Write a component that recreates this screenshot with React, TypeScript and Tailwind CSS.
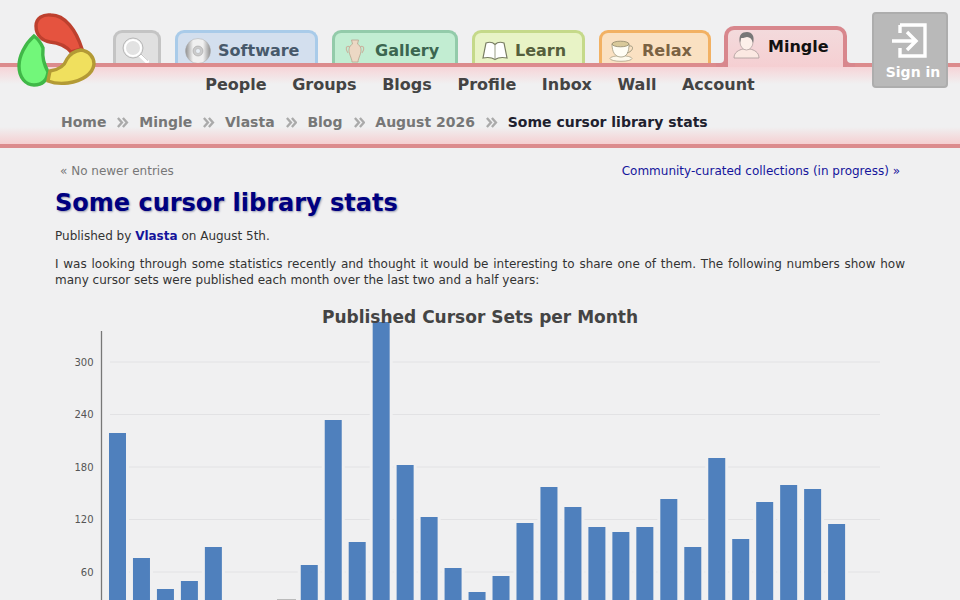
import React from "react";

const tops: [number, number][] = [
  [0, 433], [1, 558], [2, 589], [3, 581], [4, 547], [8, 565], [9, 420], [10, 542],
  [11, 322], [12, 465], [13, 517], [14, 568], [15, 592], [16, 576], [17, 523], [18, 487],
  [19, 507], [20, 527], [21, 532], [22, 527], [23, 499], [24, 547], [25, 458], [26, 539],
  [27, 502], [28, 485], [29, 489], [30, 524],
];
const bars: [number, number][] = tops.map(([i, y]) => [109 + i * 23.97, y]);
const grid: [string, number][] = [["300", 362], ["240", 414.5], ["180", 467], ["120", 519.5], ["60", 572]];

function Logo() {
  return (
    <svg width="110" height="100" viewBox="0 0 110 100" className="absolute left-0 top-0 z-20">
      <path d="M36,26 C36,18 43,14 51,15 C65,15 76,30 82,49 L71,52 C66,46 60,43 50,42 C43,41 36,36 36,26 Z" fill="#e5533f" stroke="#bd402e" strokeWidth="3.4" />
      <path d="M34,36 C25,44 19,56 19,66 C19,78 26,85 34,85 C42,85 47,81 48,72 C44,64 42,58 43,48 C41,43 38,39 34,36 Z" fill="#72f77a" stroke="#40b848" strokeWidth="3.4" />
      <path d="M81,50 C89,51 94,57 94,64 C93,74 82,81 68,83 C60,84 53,83 48,81 L50,71 C58,70 64,67 67,59 C70,54 75,51 81,50 Z" fill="#f0e05e" stroke="#b39a35" strokeWidth="3.4" />
    </svg>
  );
}

function Magnifier() {
  return (
    <svg width="30" height="30" viewBox="0 0 30 30">
      <path d="M18,18 L26,25.5" stroke="#fff" strokeWidth="4" strokeLinecap="round" />
      <path d="M19,17 L27,24.5" stroke="#bbb" strokeWidth="1" />
      <circle cx="12" cy="12" r="10" fill="#e6e6e6" stroke="#b8b8b8" strokeWidth="1" />
      <circle cx="12" cy="12" r="8" fill="#e2e2e2" stroke="#fff" strokeWidth="2" />
    </svg>
  );
}

function Cd() {
  return (
    <svg width="26" height="26" viewBox="0 0 26 26">
      <defs>
        <linearGradient id="cdg" x1="0" y1="0.5" x2="1" y2="0.5">
          <stop offset="0" stopColor="#8f8f8f" />
          <stop offset="0.3" stopColor="#f0f0f0" />
          <stop offset="0.7" stopColor="#f0f0f0" />
          <stop offset="1" stopColor="#8f8f8f" />
        </linearGradient>
      </defs>
      <circle cx="13" cy="13" r="12.5" fill="url(#cdg)" stroke="#aaa" strokeWidth="0.5" />
      <circle cx="13" cy="13" r="5" fill="#ccc" stroke="#999" strokeWidth="0.5" />
      <circle cx="13" cy="13" r="2.5" fill="#e8eef4" stroke="#aaa" strokeWidth="0.5" />
    </svg>
  );
}

function Vase() {
  return (
    <svg width="20" height="24" viewBox="0 0 20 24">
      <path d="M6.5,1 L13.5,1 L12.5,5 C16,7 17,11 15,16 C14,19 13,21 13,23 L7,23 C7,21 6,19 5,16 C3,11 4,7 7.5,5 Z" fill="#ecd8c4" stroke="#b7a48f" strokeWidth="0.8" />
      <path d="M5,8 C1,6 0,10 3,14 M15,8 C19,6 20,10 17,14" fill="none" stroke="#c9b5a0" strokeWidth="1.2" />
    </svg>
  );
}

function Book() {
  return (
    <svg width="26" height="20" viewBox="0 0 26 20">
      <path d="M1,17 L4,2 C8,0.5 11,1.5 13,3.5 C15,1.5 18,0.5 22,2 L25,17 C20,16 16,16.5 13,18.5 C10,16.5 6,16 1,17 Z" fill="#fff" stroke="#777c62" strokeWidth="1.2" />
      <path d="M13,3.5 L13,18.5" stroke="#999e85" strokeWidth="1" />
    </svg>
  );
}

function Cup() {
  return (
    <svg width="26" height="22" viewBox="0 0 26 22">
      <ellipse cx="12" cy="18.5" rx="11" ry="2.8" fill="#fdf8ea" stroke="#a09a80" strokeWidth="0.7" />
      <path d="M3,4 C3,12 6,17 12,17 C18,17 20,12 20,4 Z" fill="#fffdf4" stroke="#a09a80" strokeWidth="0.8" />
      <ellipse cx="11.5" cy="4" rx="8.5" ry="2.8" fill="#d9c99a" stroke="#8f8768" strokeWidth="0.8" />
      <path d="M20,6 C25,5 25,11 18,13" fill="none" stroke="#a09a80" strokeWidth="1" />
    </svg>
  );
}

function Person() {
  return (
    <svg width="27" height="28" viewBox="0 0 27 28">
      <path d="M1,27 C1,21 6,19 10,18 L17,18 C21,19 26,21 26,27 Z" fill="#fbe8e2" stroke="#a99" strokeWidth="0.8" />
      <ellipse cx="13.5" cy="11" rx="6.5" ry="8" fill="#fdf0ea" stroke="#a99" strokeWidth="0.7" />
      <path d="M7,12 C5,4 9,1 14,1 C19,1 22,5 20,12 C19,8 17,6 14,6 C11,7 9,7 8,7 Z" fill="#777" />
    </svg>
  );
}

function Chevrons() {
  return (
    <svg width="12.8" height="11" viewBox="0 0 12 11" className="mx-[10px]">
      <path d="M1.5,1 L5.5,5.5 L1.5,10 M6.5,1 L10.5,5.5 L6.5,10" fill="none" stroke="#aaa" strokeWidth="2.4" />
    </svg>
  );
}

function Tab({ cls, text, icon, label }: { cls: string; text: string; icon: React.ReactNode; label: string }) {
  return (
    <a className={"flex h-[33px] items-center overflow-hidden rounded-t-[9px] border-[3px] border-b-0 pl-[7px] pt-[5px] text-[16px] font-bold " + cls}>
      <span className="flex w-[26px] shrink-0 justify-center">{icon}</span>
      <span className={"ml-[7px] " + text}>{label}</span>
    </a>
  );
}

function Chart() {
  return (
    <svg width="960" height="300" viewBox="0 300 960 300" className="-ml-[55px] mt-[12px] block max-w-none">
      {grid.map(([l, y]) => (
        <g key={l}>
          <line x1="110" x2="880" y1={y} y2={y} stroke="#e2e2e4" strokeWidth="1" />
          <text x="93.5" y={y + 3.5} textAnchor="end" fontSize="10" fill="#555">{l}</text>
        </g>
      ))}
      <line x1="101.5" x2="101.5" y1="331" y2="600" stroke="#777" strokeWidth="1.3" />
      {bars.map(([x, y]) => (
        <rect key={"h" + x} x={x - 3} y={y - 3} width="23" height={606 - y} fill="#f0f0f1" />
      ))}
      <rect x="277" y="599" width="19" height="1" fill="#bbb" />
      {bars.map(([x, y]) => (
        <rect key={x} x={x} y={y} width="17" height={600 - y} fill="#4f80bd" />
      ))}
      <text x="480" y="323" textAnchor="middle" fontSize="17" fontWeight="700" fill="#444">Published Cursor Sets per Month</text>
    </svg>
  );
}

export default function App() {
  const crumbs = ["Home", "Mingle", "Vlasta", "Blog", "August 2026"];
  return (
    <div className="relative h-[600px] w-[960px] overflow-hidden bg-[#f0f0f1] font-['DejaVu_Sans',sans-serif]">
      <Logo />
      <header>
        <div className="relative z-10 flex h-[63px] items-end pl-[113px]">
          <a className="flex h-[33px] w-[48px] overflow-hidden rounded-t-[9px] border-[3px] border-b-0 border-[#c4c4c4] bg-[#e0e0e0] pl-[5px] pt-[3px]">
            <span className="block h-[30px] w-[30px]"><Magnifier /></span>
          </a>
          <div className="ml-[14px] w-[143px]">
            <Tab cls="border-[#a9cbe9] bg-[#d3dfee]" text="text-[#47596b]" icon={<Cd />} label="Software" />
          </div>
          <div className="ml-[14px] w-[126px]">
            <Tab cls="border-[#93cbaa] bg-[#c2edd2]" text="text-[#3c6650]" icon={<Vase />} label="Gallery" />
          </div>
          <div className="ml-[14px] w-[113px]">
            <Tab cls="border-[#c5d98a] bg-[#e8f3c6]" text="text-[#555f3c]" icon={<Book />} label="Learn" />
          </div>
          <div className="ml-[14px] w-[112px]">
            <Tab cls="border-[#f2b163] bg-[#fae1c2]" text="text-[#7a6242]" icon={<Cup />} label="Relax" />
          </div>
          <div className="relative -mb-[4px] ml-[13px] flex h-[41px] w-[123px] items-start rounded-t-[10px] border-4 border-b-0 border-[#d8878d] bg-[linear-gradient(#f3dadc,#f5cfd2)] pl-[5px] pt-[1px] text-[16px] font-bold text-[#111]">
            <Person />
            <span className="ml-[8px] mt-[4px]">Mingle</span>
            <span className="absolute -left-[12px] bottom-0 h-[10px] w-[12px] rounded-br-[8px] border-b-4 border-r-4 border-[#d8878d] bg-[#f0f0f1]" />
            <span className="absolute -right-[12px] bottom-0 h-[10px] w-[12px] rounded-bl-[8px] border-b-4 border-l-4 border-[#d8878d] bg-[#f0f0f1]" />
          </div>
        </div>
        <div className="h-[85px] border-y-4 border-[#dc8b8d] bg-[linear-gradient(#f6d4d7_0px,#f0f0f1_17px,#f0f0f1_60px,#f5cfd1_77px)]">
          <nav className="flex h-[34px] items-center justify-center gap-[25.6px] pt-[1px] text-[16px] font-bold text-[#444]">
            <a>People</a>
            <a>Groups</a>
            <a>Blogs</a>
            <a>Profile</a>
            <a>Inbox</a>
            <a>Wall</a>
            <a>Account</a>
          </nav>
          <div className="mt-[4px] flex h-[34px] items-center pl-[61px] text-[14px] font-bold text-[#777]">
            {crumbs.map((c) => (
              <React.Fragment key={c}>
                <a>{c}</a>
                <Chevrons />
              </React.Fragment>
            ))}
            <span className="text-[#20202e]">Some cursor library stats</span>
          </div>
        </div>
      </header>
      <a className="absolute left-[872px] top-[12px] z-20 flex h-[76px] w-[76px] flex-col items-center rounded-[4px] border-2 border-[#adadad] bg-[#b9b9b9] pt-[9px] text-[14px] font-bold text-white">
        <svg width="36" height="36" viewBox="0 0 36 36" fill="none" stroke="#fff" strokeWidth="3.4">
          <path d="M8,2 L33,2 L33,33 L8,33 L8,25" />
          <path d="M8,10 L8,2" />
          <path d="M0,18 L23,18 M15,9 L24,18 L15,27" />
        </svg>
        <span className="ml-[6px] mt-[5px] leading-[16px]">Sign in</span>
      </a>
      <main className="px-[55px]">
        <div className="flex justify-between pl-[5px] pr-[5px] pt-[15px] text-[12px] leading-[16px]">
          <span className="text-[#777]">« No newer entries</span>
          <a className="text-[#15159c]">Community-curated collections (in progress) »</a>
        </div>
        <h1 className="mt-[8px] text-[24px] font-bold leading-[32px] text-[#000080] [text-shadow:1px_1px_2px_#9a9ab0]">Some cursor library stats</h1>
        <p className="mt-[9px] text-[12px] leading-[16px] text-[#333]">
          Published by <a className="font-bold text-[#15159c]">Vlasta</a> on August 5th.
        </p>
        <p className="mt-[12px] text-justify text-[12px] leading-[16px] text-[#333]">
          I was looking through some statistics recently and thought it would be interesting to share one of them. The following numbers show how many cursor sets were published each month over the last two and a half years:
        </p>
        <Chart />
      </main>
    </div>
  );
}
